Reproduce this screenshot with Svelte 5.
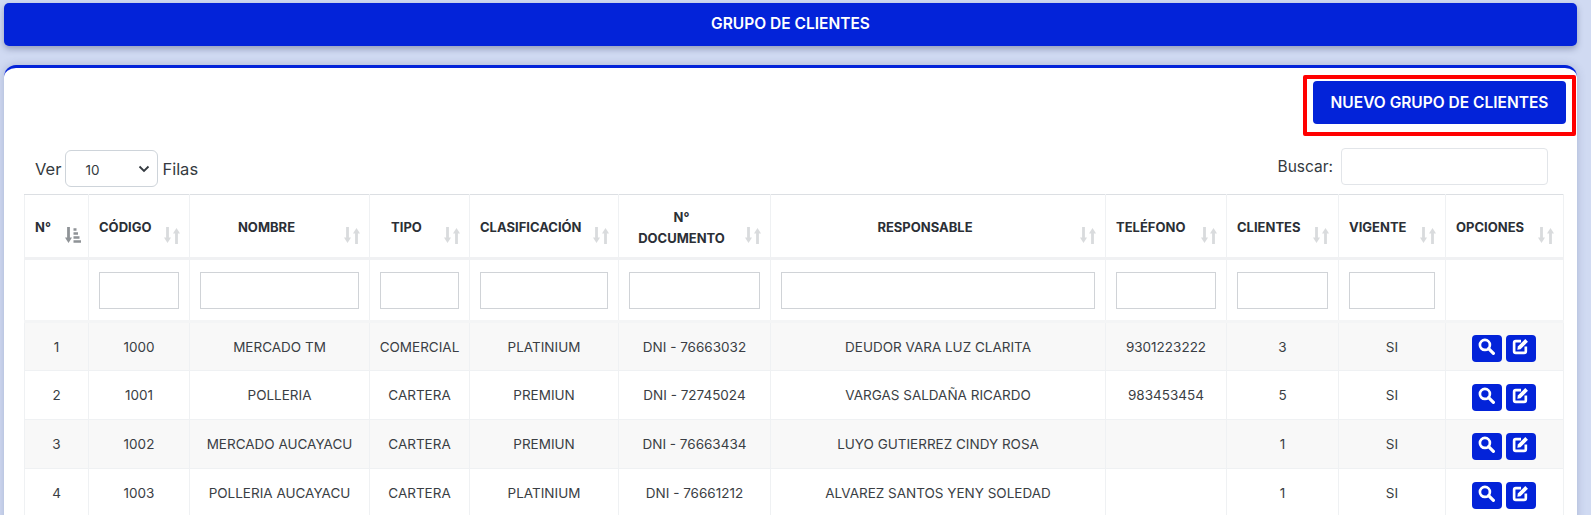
<script>
  const columns = [
    { label: "N°", width: 64, left: true, sorted: true },
    { label: "CÓDIGO", width: 101, left: true, filter: true },
    { label: "NOMBRE", width: 180, filter: true },
    { label: "TIPO", width: 100, filter: true },
    { label: "CLASIFICACIÓN", width: 149, left: true, filter: true },
    { label: "N° DOCUMENTO", width: 152, filter: true },
    { label: "RESPONSABLE", width: 335, filter: true },
    { label: "TELÉFONO", width: 121, left: true, filter: true },
    { label: "CLIENTES", width: 112, left: true, filter: true },
    { label: "VIGENTE", width: 107, left: true, filter: true },
    { label: "OPCIONES", width: 118, left: true }
  ];

  const rows = [
    ["1", "1000", "MERCADO TM", "COMERCIAL", "PLATINIUM", "DNI - 76663032", "DEUDOR VARA LUZ CLARITA", "9301223222", "3", "SI"],
    ["2", "1001", "POLLERIA", "CARTERA", "PREMIUN", "DNI - 72745024", "VARGAS SALDAÑA RICARDO", "983453454", "5", "SI"],
    ["3", "1002", "MERCADO AUCAYACU", "CARTERA", "PREMIUN", "DNI - 76663434", "LUYO GUTIERREZ CINDY ROSA", "", "1", "SI"],
    ["4", "1003", "POLLERIA AUCAYACU", "CARTERA", "PLATINIUM", "DNI - 76661212", "ALVAREZ SANTOS YENY SOLEDAD", "", "1", "SI"]
  ];
</script>

<div class="page">
  <div class="title">GRUPO DE CLIENTES</div>

  <div class="card">
    <div class="actions">
      <div class="highlight">
        <button class="new">NUEVO GRUPO DE CLIENTES</button>
      </div>
    </div>

    <div class="tools">
      <div class="length">
        <span>Ver</span>
        <div class="select">10
          <svg width="12" height="8" viewBox="0 0 12 8"><path d="M1.5 1.5 6 6l4.5-4.5" fill="none" stroke="#343a40" stroke-width="1.8"/></svg>
        </div>
        <span>Filas</span>
      </div>
      <div class="search">
        <span>Buscar:</span>
        <input type="text" />
      </div>
    </div>

    <table>
      <colgroup>
        {#each columns as col}
          <col style="width: {col.width}px" />
        {/each}
      </colgroup>
      <thead>
        <tr class="heads">
          {#each columns as col}
            <th class:left={col.left}>
              {#if col.label === "N° DOCUMENTO"}N°<br />DOCUMENTO{:else}{col.label}{/if}
              <svg class="sort" class:on={col.sorted} width="16" height="17" viewBox="0 0 16 17">
                <path d="M3.500 0v12" stroke="currentColor" stroke-width="2.800"/>
                <path d="M0 10.500h7L3.500 16z" fill="currentColor"/>
                {#if col.sorted}
                  <path d="M8.500 2.500h3M8.500 6.500h4.500M8.500 10.500h6M8.500 14.500h7.500" fill="none" stroke="currentColor" stroke-width="2.600"/>
                {:else}
                  <path d="M12.500 17V5" stroke="currentColor" stroke-width="2.800"/>
                  <path d="M9 6.500h7L12.500 1z" fill="currentColor"/>
                {/if}
              </svg>
            </th>
          {/each}
        </tr>
        <tr class="filters">
          {#each columns as col}
            <th>
              {#if col.filter}<input type="text" />{/if}
            </th>
          {/each}
        </tr>
      </thead>
      <tbody>
        {#each rows as row}
          <tr>
            {#each row as cell}
              <td>{cell}</td>
            {/each}
            <td class="ops">
              <button class="icon" aria-label="Ver">
                <svg width="17" height="17" viewBox="0 0 16 16"><circle cx="6.500" cy="6.500" r="4.700" fill="none" stroke="#fff" stroke-width="2.500"/><path d="m10 10 4.500 4.500" stroke="#fff" stroke-width="3" stroke-linecap="round"/></svg>
              </button>
              <button class="icon" aria-label="Editar">
                <svg width="17" height="17" viewBox="0 0 16 16"><path d="M8.500 3H3.500Q2 3 2 4.500v8Q2 14 3.500 14h8q1.500 0 1.500-1.500V8" fill="none" stroke="#fff" stroke-width="2.500"/><path d="M5.500 8 12.500 1l2.500 2.500L8 10.500l-3 .5z" fill="#fff"/></svg>
              </button>
            </td>
          </tr>
        {/each}
      </tbody>
    </table>
  </div>
</div>

<style>
  :global(body) {
    margin: 0;
    background: #d0daf2;
    overflow: hidden;
  }
  .page {
    height: 515px;
    padding: 3px 14px 0 4px;
    box-sizing: border-box;
    overflow: hidden;
    font-family: "Inter", "Noto Sans", sans-serif;
    color: #343a40;
  }
  .title {
    height: 43px;
    line-height: 42px;
    background: #0323d9;
    color: #fff;
    text-align: center;
    font-size: 15.500px;
    font-weight: 600;
    border-radius: 5px;
    box-shadow: 0 3px 6px rgba(40, 50, 90, 0.35);
  }
  .card {
    margin-top: 19px;
    background: #fff;
    border-top: 3px solid #0323d9;
    border-radius: 12px 12px 0 0;
    box-shadow: 0 0 8px rgba(60, 70, 120, 0.25);
    padding: 7px 14px 0 20px;
    height: 460px;
  }
  .actions {
    display: flex;
    justify-content: flex-end;
    margin-right: -13px;
  }
  .highlight {
    border: 4px solid #f00;
    border-radius: 2px;
    padding: 2px 6px 8px 6px;
  }
  .new {
    display: block;
    width: 253px;
    height: 43px;
    padding: 0;
    border: 0;
    border-radius: 4px;
    background: #0323d9;
    color: #fff;
    font: 600 15.500px "Inter", "Noto Sans", sans-serif;
  }
  .tools {
    display: flex;
    justify-content: space-between;
    height: 58px;
    font-size: 15.500px;
  }
  .length {
    display: flex;
    align-items: center;
    gap: 4px;
    height: 37px;
    margin-top: 14px;
    padding-left: 11px;
    font-size: 16.500px;
  }
  .select {
    width: 93px;
    height: 37px;
    box-sizing: border-box;
    border: 1px solid #ced4da;
    border-radius: 6px;
    padding: 11px 0 0 19px;
    font-size: 13.500px;
    position: relative;
  }
  .select svg {
    position: absolute;
    right: 7px;
    top: 14px;
  }
  .search {
    display: flex;
    align-items: center;
    gap: 8px;
    height: 37px;
    margin-top: 12px;
    margin-right: 15px;
  }
  .search input {
    width: 207px;
    height: 37px;
    box-sizing: border-box;
    border: 1px solid #e2e5e9;
    border-radius: 4px;
  }
  table {
    width: 1539px;
    table-layout: fixed;
    border-collapse: collapse;
    font-size: 13.500px;
  }
  th, td {
    border: 1px solid #eff1f3;
    padding: 0;
    text-align: center;
  }
  .heads th {
    position: relative;
    height: 59px;
    font-size: 13px;
    font-weight: 700;
    line-height: 21px;
    color: #2b2f36;
    padding: 3px 36px 0 10px;
    border-top: 1px solid #dcdfe3;
    border-bottom: 3px solid #f0f1f3;
  }
  .heads th.left {
    text-align: left;
    padding-right: 24px;
  }
  .sort {
    position: absolute;
    right: 9px;
    top: 32px;
    color: #d9dbdd;
  }
  .sort.on {
    color: #8f9397;
    right: 7px;
  }
  .filters th {
    height: 60px;
    border-bottom: 3px solid #f4f5f6;
  }
  .filters input {
    display: block;
    box-sizing: border-box;
    width: calc(100% - 20px);
    height: 37px;
    margin: 0 10px;
    border: 1px solid #d0d3d7;
    border-radius: 0;
  }
  tbody tr {
    height: 49px;
  }
  tbody tr:nth-child(odd) {
    background: #f8f8f8;
  }
  td {
    color: #3a3e44;
  }
  .ops {
    font-size: 0;
    padding-right: 2px;
  }
  .icon {
    display: inline-flex;
    align-items: center;
    justify-content: center;
    width: 30px;
    height: 27px;
    margin: 4px 2px 0;
    padding: 0 0 4px;
    box-sizing: border-box;
    border: 0;
    border-radius: 4px;
    background: #0323d9;
  }
</style>
